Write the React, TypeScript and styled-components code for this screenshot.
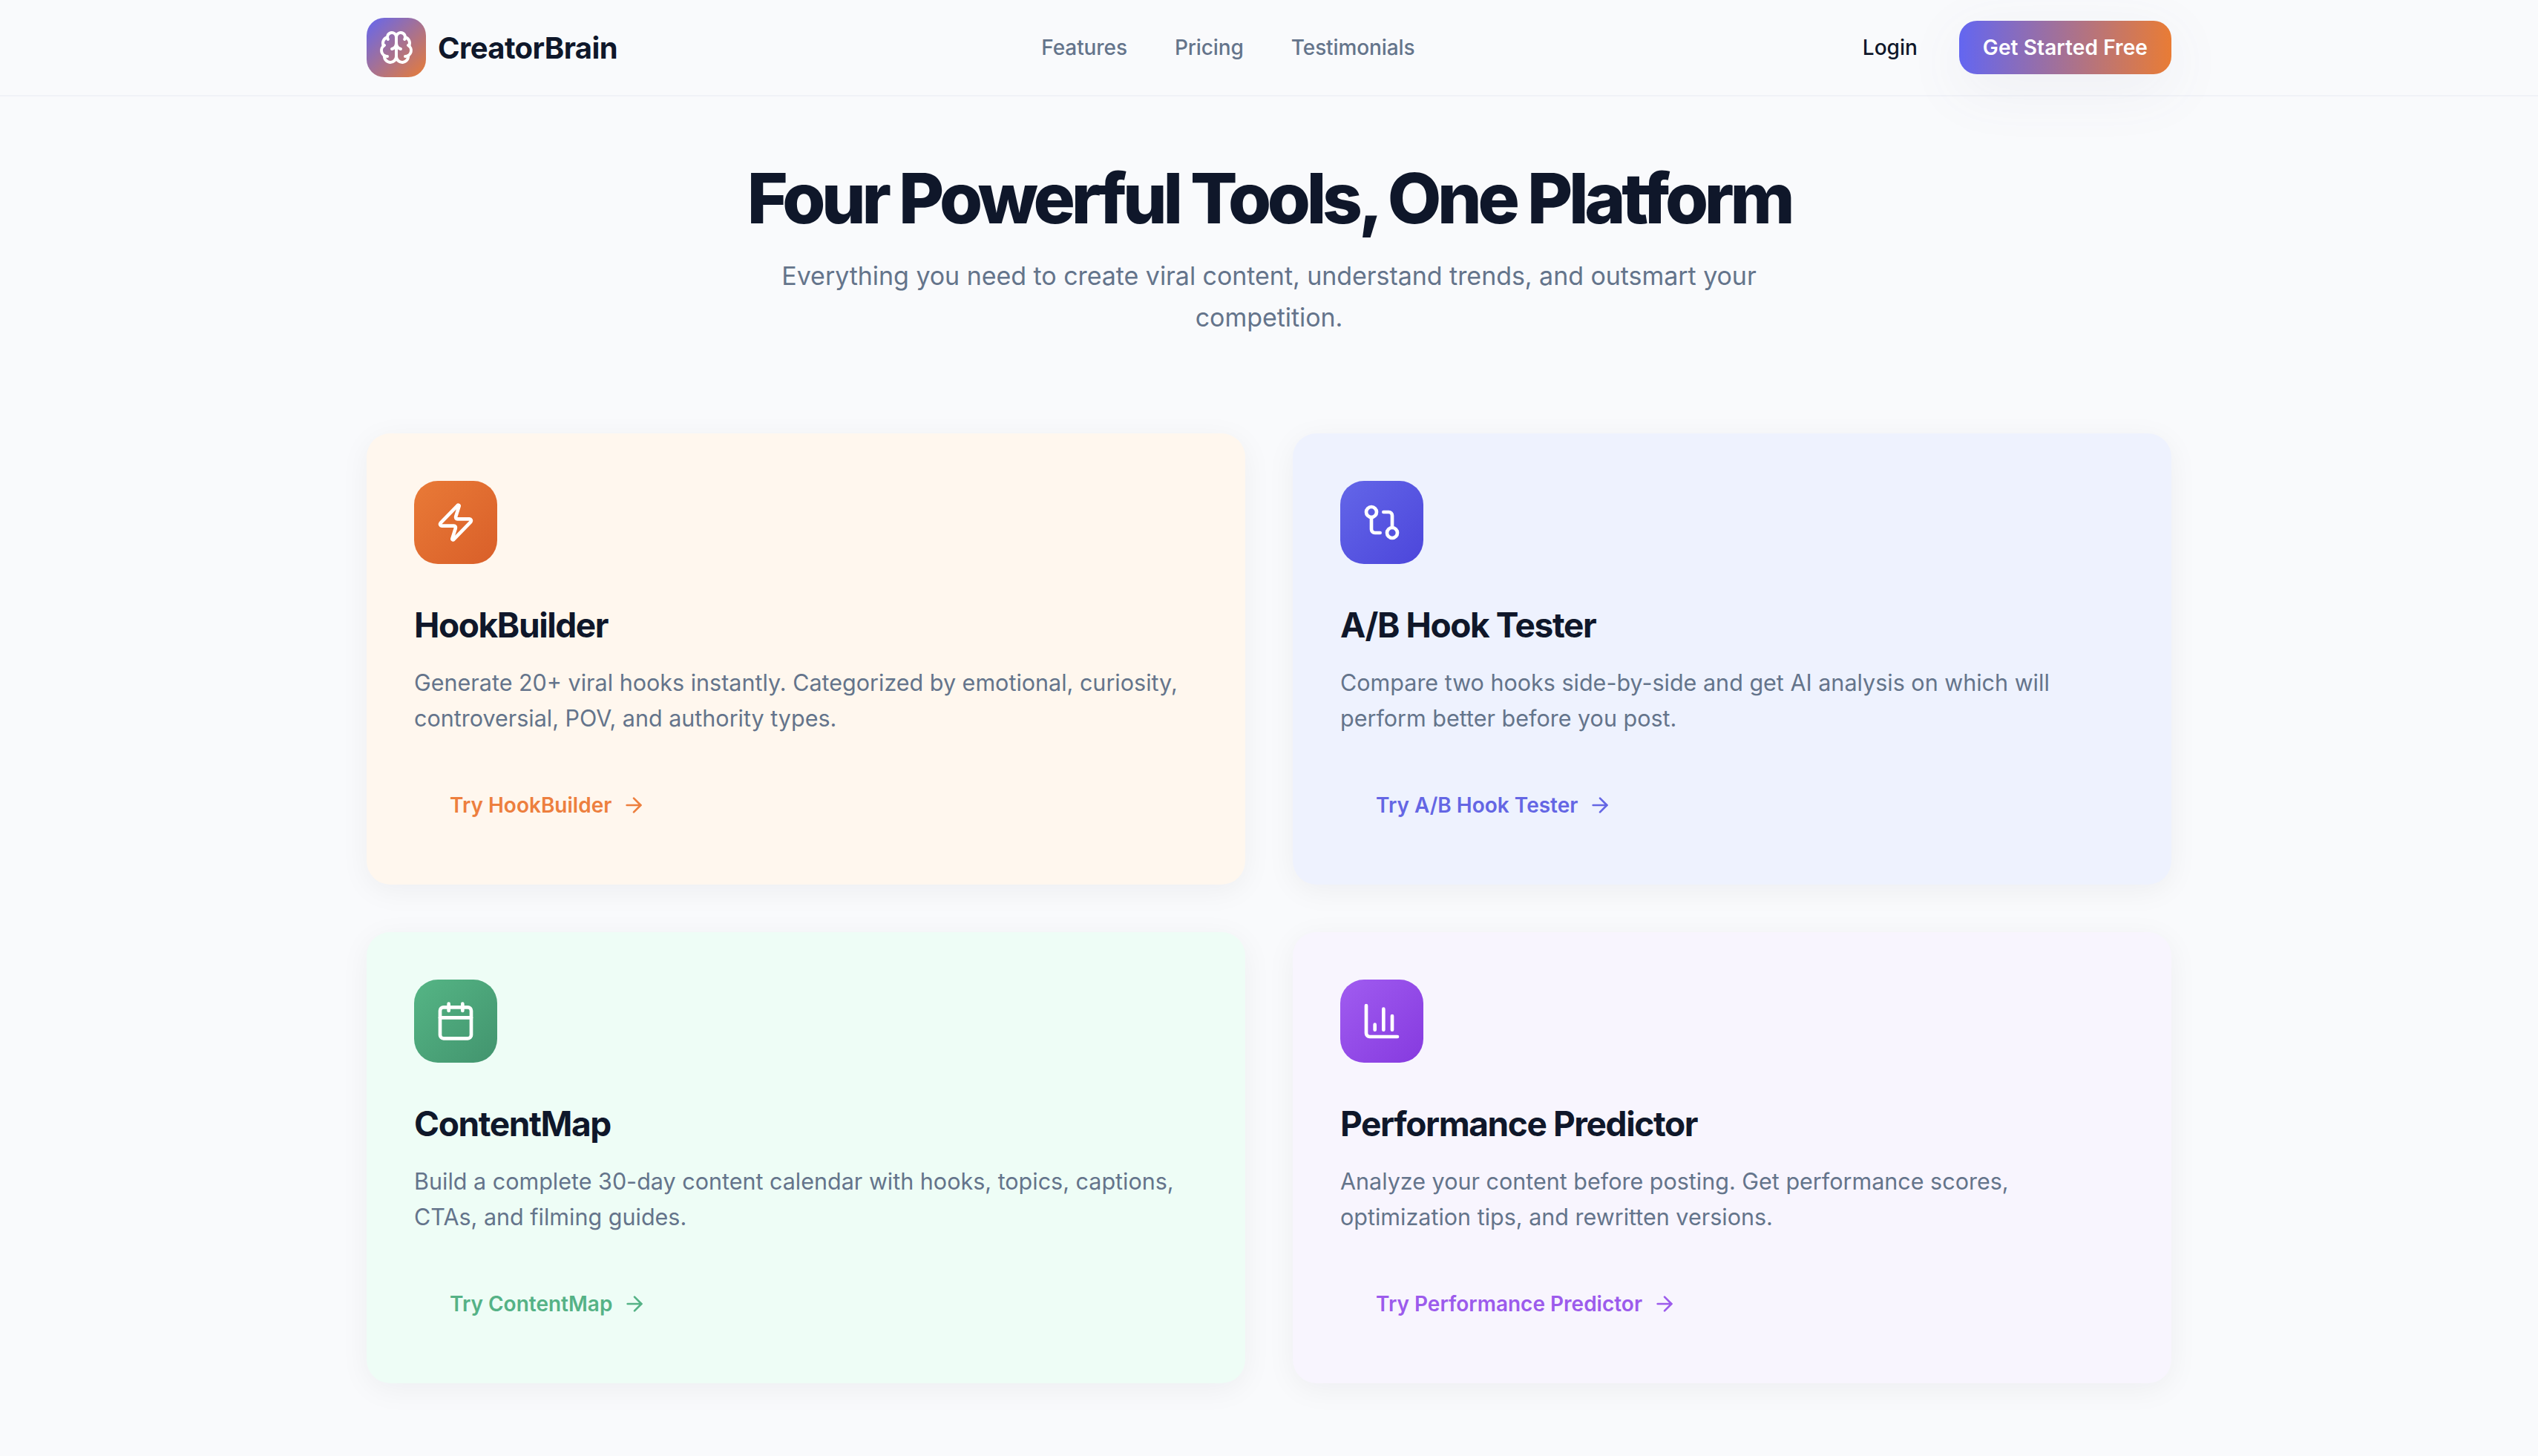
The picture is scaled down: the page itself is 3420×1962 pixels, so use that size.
import React from 'react'
import styled, { createGlobalStyle } from 'styled-components'
import { ArrowRight, Brain, Calendar, ChartColumn, GitCompare, Zap } from 'lucide-react'

const GlobalStyle = createGlobalStyle`
	html, body {
		margin: 0;
		background: #f9fafc;
	}
	* {
		box-sizing: border-box;
	}
	body {
		font-family: Inter, "Liberation Sans", sans-serif;
		color: #0f172a;
	}
`

const Header = styled.header`
	height: 130px;
	border-bottom: 2px solid #f0f2f7;
`
const HeaderInner = styled.div`
	width: 2560px;
	height: 128px;
	margin: 0 auto;
	padding: 0 64px;
	display: flex;
	justify-content: space-between;
	align-items: center;
`
const Brand = styled.div`
	display: flex;
	align-items: center;
	gap: 16px;
`
const LogoMark = styled.div`
	width: 80px;
	height: 80px;
	border-radius: 24px;
	background: linear-gradient(135deg, #6366f1, #e97c35);
	color: #fff;
	display: flex;
	align-items: center;
	justify-content: center;
`
const BrandName = styled.span`
	font-size: 40px;
	font-weight: 700;
	letter-spacing: -0.6px;
`
const NavLinks = styled.nav`
	display: flex;
	gap: 64px;
`
const NavLink = styled.a`
	font-size: 28px;
	font-weight: 500;
	letter-spacing: -0.1px;
	color: #64748b;
`
const Actions = styled.div`
	display: flex;
	align-items: center;
	gap: 24px;
`
const Login = styled.a`
	padding: 0 32px;
	font-size: 28px;
	font-weight: 500;
`
const PrimaryButton = styled.a`
	height: 72px;
	padding: 0 32px;
	display: flex;
	align-items: center;
	border-radius: 24px;
	background: linear-gradient(90deg, #6366f1, #e97c35);
	box-shadow: 0 20px 80px rgba(99, 102, 141, 0.08);
	color: #fff;
	font-size: 28px;
	font-weight: 600;
	letter-spacing: 0.1px;
`
const Hero = styled.section`
	padding-top: 82px;
	text-align: center;
`
const Title = styled.h1`
	margin: 0;
	font-size: 94px;
	line-height: 110px;
	font-weight: 800;
	letter-spacing: -5.3px;
`
const Subtitle = styled.p`
	width: 1344px;
	margin: 22px auto 0;
	font-size: 34px;
	line-height: 56px;
	letter-spacing: -0.05px;
	color: #64748b;
`
const Grid = styled.main`
	width: 2560px;
	margin: 0 auto;
	padding: 128px 64px 98px;
	display: grid;
	grid-template-columns: 1fr 1fr;
	gap: 64px;
`
const Card = styled.article<{ $bg: string }>`
	height: 608px;
	padding: 64px;
	border-radius: 32px;
	background: ${p => p.$bg};
	box-shadow: 0 8px 40px rgba(15, 23, 42, 0.05);
`
const IconTile = styled.div<{ $from: string; $to: string }>`
	width: 112px;
	height: 112px;
	border-radius: 32px;
	background: linear-gradient(135deg, ${p => p.$from}, ${p => p.$to});
	color: #fff;
	display: flex;
	align-items: center;
	justify-content: center;
`
const CardTitle = styled.h2`
	margin: 50px 0 0;
	font-size: 46px;
	line-height: 64px;
	font-weight: 700;
	letter-spacing: -1.4px;
`
const CardText = styled.p`
	margin: 22px 0 0;
	font-size: 30.5px;
	line-height: 48px;
	color: #64748b;
`
const TryLink = styled.a<{ $color: string }>`
	margin: 61px 0 0 48px;
	height: 64px;
	display: flex;
	align-items: center;
	gap: 14px;
	font-size: 28px;
	font-weight: 600;
	color: ${p => p.$color};
`

const tools = [
	{
		name: 'HookBuilder',
		text: 'Generate 20+ viral hooks instantly. Categorized by emotional, curiosity, controversial, POV, and authority types.',
		bg: '#fff7ee',
		from: '#e97a37',
		to: '#d95f29',
		color: '#ed7f3e',
		Icon: Zap,
	},
	{
		name: 'A/B Hook Tester',
		text: 'Compare two hooks side-by-side and get AI analysis on which will perform better before you post.',
		bg: '#eef2fe',
		from: '#6366e8',
		to: '#4c46db',
		color: '#6466e4',
		Icon: GitCompare,
	},
	{
		name: 'ContentMap',
		text: 'Build a complete 30-day content calendar with hooks, topics, captions, CTAs, and filming guides.',
		bg: '#eefdf6',
		from: '#55b585',
		to: '#42946e',
		color: '#55b286',
		Icon: Calendar,
	},
	{
		name: 'Performance Predictor',
		text: 'Analyze your content before posting. Get performance scores, optimization tips, and rewritten versions.',
		bg: '#f8f5fe',
		from: '#a05cf0',
		to: '#863adf',
		color: '#9c5bec',
		Icon: ChartColumn,
	},
]

const App = () => {
	return (
		<>
			<GlobalStyle />
			<Header>
				<HeaderInner>
					<Brand>
						<LogoMark>
							<Brain size={48} />
						</LogoMark>
						<BrandName>CreatorBrain</BrandName>
					</Brand>
					<NavLinks>
						<NavLink>Features</NavLink>
						<NavLink>Pricing</NavLink>
						<NavLink>Testimonials</NavLink>
					</NavLinks>
					<Actions>
						<Login>Login</Login>
						<PrimaryButton>Get Started Free</PrimaryButton>
					</Actions>
				</HeaderInner>
			</Header>
			<Hero>
				<Title>Four Powerful Tools, One Platform</Title>
				<Subtitle>
					Everything you need to create viral content, understand trends, and
					outsmart your competition.
				</Subtitle>
			</Hero>
			<Grid>
				{tools.map(({ name, text, bg, from, to, color, Icon }) => (
					<Card key={name} $bg={bg}>
						<IconTile $from={from} $to={to}>
							<Icon size={56} />
						</IconTile>
						<CardTitle>{name}</CardTitle>
						<CardText>{text}</CardText>
						<TryLink $color={color}>
							Try {name}
							<ArrowRight size={32} />
						</TryLink>
					</Card>
				))}
			</Grid>
		</>
	)
}

export default App
